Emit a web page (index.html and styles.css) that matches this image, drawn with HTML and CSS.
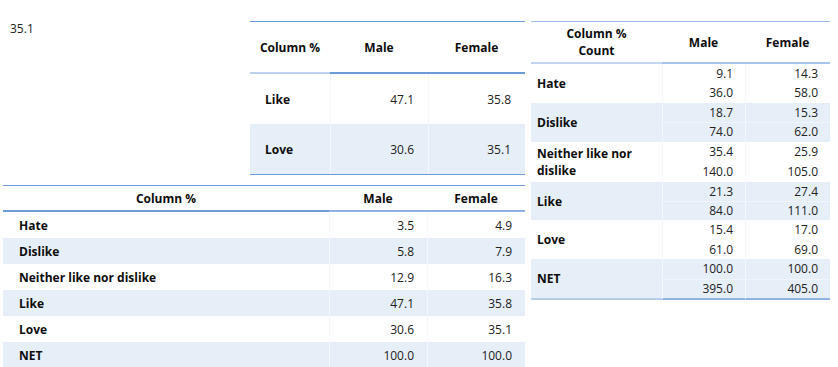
FILE: index.html
```html
<!DOCTYPE html>
<html lang="en">
<head>
<meta charset="utf-8">
<title>Crosstabs</title>
<link rel="stylesheet" href="styles.css">
</head>
<body>
<div class="page">
  <div class="kpi">35.1</div>

  <table class="t t-mid">
    <colgroup><col class="c-lab"><col class="c-m"><col class="c-f"></colgroup>
    <thead>
      <tr><th class="lab">Column %</th><th>Male</th><th>Female</th></tr>
    </thead>
    <tbody>
      <tr><td class="lab">Like</td><td class="v">47.1</td><td class="v">35.8</td></tr>
      <tr class="alt"><td class="lab">Love</td><td class="v">30.6</td><td class="v">35.1</td></tr>
    </tbody>
  </table>

  <table class="t t-right">
    <colgroup><col class="c-lab"><col class="c-m"><col class="c-f"></colgroup>
    <thead>
      <tr><th class="lab">Column %<br>Count</th><th>Male</th><th>Female</th></tr>
    </thead>
    <tbody>
      <tr class="s1"><td class="lab" rowspan="2">Hate</td><td class="v">9.1</td><td class="v">14.3</td></tr>
      <tr class="s2"><td class="v">36.0</td><td class="v">58.0</td></tr>
    </tbody>
    <tbody class="alt">
      <tr class="s1"><td class="lab" rowspan="2">Dislike</td><td class="v">18.7</td><td class="v">15.3</td></tr>
      <tr class="s2"><td class="v">74.0</td><td class="v">62.0</td></tr>
    </tbody>
    <tbody>
      <tr class="s1"><td class="lab" rowspan="2">Neither like nor dislike</td><td class="v">35.4</td><td class="v">25.9</td></tr>
      <tr class="s2"><td class="v">140.0</td><td class="v">105.0</td></tr>
    </tbody>
    <tbody class="alt">
      <tr class="s1"><td class="lab" rowspan="2">Like</td><td class="v">21.3</td><td class="v">27.4</td></tr>
      <tr class="s2"><td class="v">84.0</td><td class="v">111.0</td></tr>
    </tbody>
    <tbody>
      <tr class="s1"><td class="lab" rowspan="2">Love</td><td class="v">15.4</td><td class="v">17.0</td></tr>
      <tr class="s2"><td class="v">61.0</td><td class="v">69.0</td></tr>
    </tbody>
    <tbody class="alt last">
      <tr class="s1"><td class="lab" rowspan="2">NET</td><td class="v">100.0</td><td class="v">100.0</td></tr>
      <tr class="s2"><td class="v">395.0</td><td class="v">405.0</td></tr>
    </tbody>
  </table>

  <table class="t t-bottom">
    <colgroup><col class="c-lab"><col class="c-m"><col class="c-f"></colgroup>
    <thead>
      <tr><th class="lab">Column %</th><th>Male</th><th>Female</th></tr>
    </thead>
    <tbody>
      <tr><td class="lab">Hate</td><td class="v">3.5</td><td class="v">4.9</td></tr>
      <tr class="alt"><td class="lab">Dislike</td><td class="v">5.8</td><td class="v">7.9</td></tr>
      <tr><td class="lab">Neither like nor dislike</td><td class="v">12.9</td><td class="v">16.3</td></tr>
      <tr class="alt"><td class="lab">Like</td><td class="v">47.1</td><td class="v">35.8</td></tr>
      <tr><td class="lab">Love</td><td class="v">30.6</td><td class="v">35.1</td></tr>
      <tr class="alt"><td class="lab">NET</td><td class="v">100.0</td><td class="v">100.0</td></tr>
    </tbody>
  </table>
</div>
</body>
</html>
```

FILE: styles.css
```css
html, body {
  margin: 0;
  padding: 0;
  background: #ffffff;
  overflow: hidden;
}

body {
  font-family: "Open Sans", "Noto Sans", "Liberation Sans", sans-serif;
  font-size: 12px;
  color: #1c1c1c;
}

.page {
  display: grid;
  grid-template-columns: 3px 247px 275px 6px 299px;
  grid-template-rows: 185px auto;
}

.kpi {
  grid-column: 1 / 3;
  grid-row: 1;
  padding: 21px 0 0 10px;
  line-height: 16px;
  color: #222;
}

/* generic table */
.t {
  border-collapse: separate;
  border-spacing: 0;
  table-layout: fixed;
  align-self: start;
}

.t th {
  font-weight: 700;
  color: #0d0d0d;
  text-align: center;
  padding: 0;
}

.t td {
  padding: 0;
}

.t td.lab {
  font-weight: 700;
  color: #0d0d0d;
  text-align: left;
}

.t td.v {
  text-align: right;
  color: #222;
  border-left: 1px solid #f4f7fc;
}

.t .alt td {
  background: #e6eef8;
}

/* middle table */
.t-mid {
  grid-column: 3;
  grid-row: 1;
  width: 275px;
  margin-top: 21px;
  border-top: 1px solid #6d9bd7;
  border-bottom: 1px solid #6d9bd7;
}

.t-mid .c-lab { width: 80px; }
.t-mid .c-m { width: 98px; }
.t-mid .c-f { width: 97px; }

.t-mid th {
  height: 50px;
  border-bottom: 2px solid #6d9bd7;
}

.t-mid th.lab {
  border-bottom-color: #bcd0ec;
}

.t-mid td {
  height: 50px;
}

.t-mid td.lab { padding-left: 15px; }
.t-mid td.v { padding-right: 14px; }

/* right table */
.t-right {
  grid-column: 5;
  grid-row: 1 / 3;
  width: 299px;
  margin-top: 21px;
  border-top: 1px solid #9fbde6;
}

.t-right .c-lab { width: 131px; }
.t-right .c-m { width: 83px; }
.t-right .c-f { width: 85px; }

.t-right th {
  height: 40px;
  line-height: 17px;
  border-bottom: 2px solid #a9c4e9;
}

.t-right th.lab {
  border-bottom-color: #c4d6ef;
}

.t-right td.lab {
  padding: 3px 4px 3px 6px;
  line-height: 17px;
  vertical-align: middle;
}

.t-right td.v {
  height: 19.4px;
  line-height: 19.4px;
  padding-right: 12px;
}

.t-right .alt .s2 td.v {
  box-shadow: inset 0 1px 0 #f1f5fb;
}

.t-right tbody.last .s2 td,
.t-right tbody.last td.lab {
  border-bottom: 2px solid #8fb2e2;
}

.t-right tbody.last td.lab {
  border-bottom-color: #b7cdec;
}

/* bottom table */
.t-bottom {
  grid-column: 2 / 4;
  grid-row: 2;
  width: 522px;
  border-top: 1px solid #6d9bd7;
}

.t-bottom .c-lab { width: 326px; }
.t-bottom .c-m { width: 98px; }
.t-bottom .c-f { width: 98px; }

.t-bottom th {
  height: 24px;
  border-bottom: 2px solid #6d9bd7;
}

.t-bottom th + th {
  border-bottom-color: #8fb2e2;
}

.t-bottom td {
  height: 26px;
}

.t-bottom td.lab { padding-left: 16px; }
.t-bottom td.v { padding-right: 13px; }
```
